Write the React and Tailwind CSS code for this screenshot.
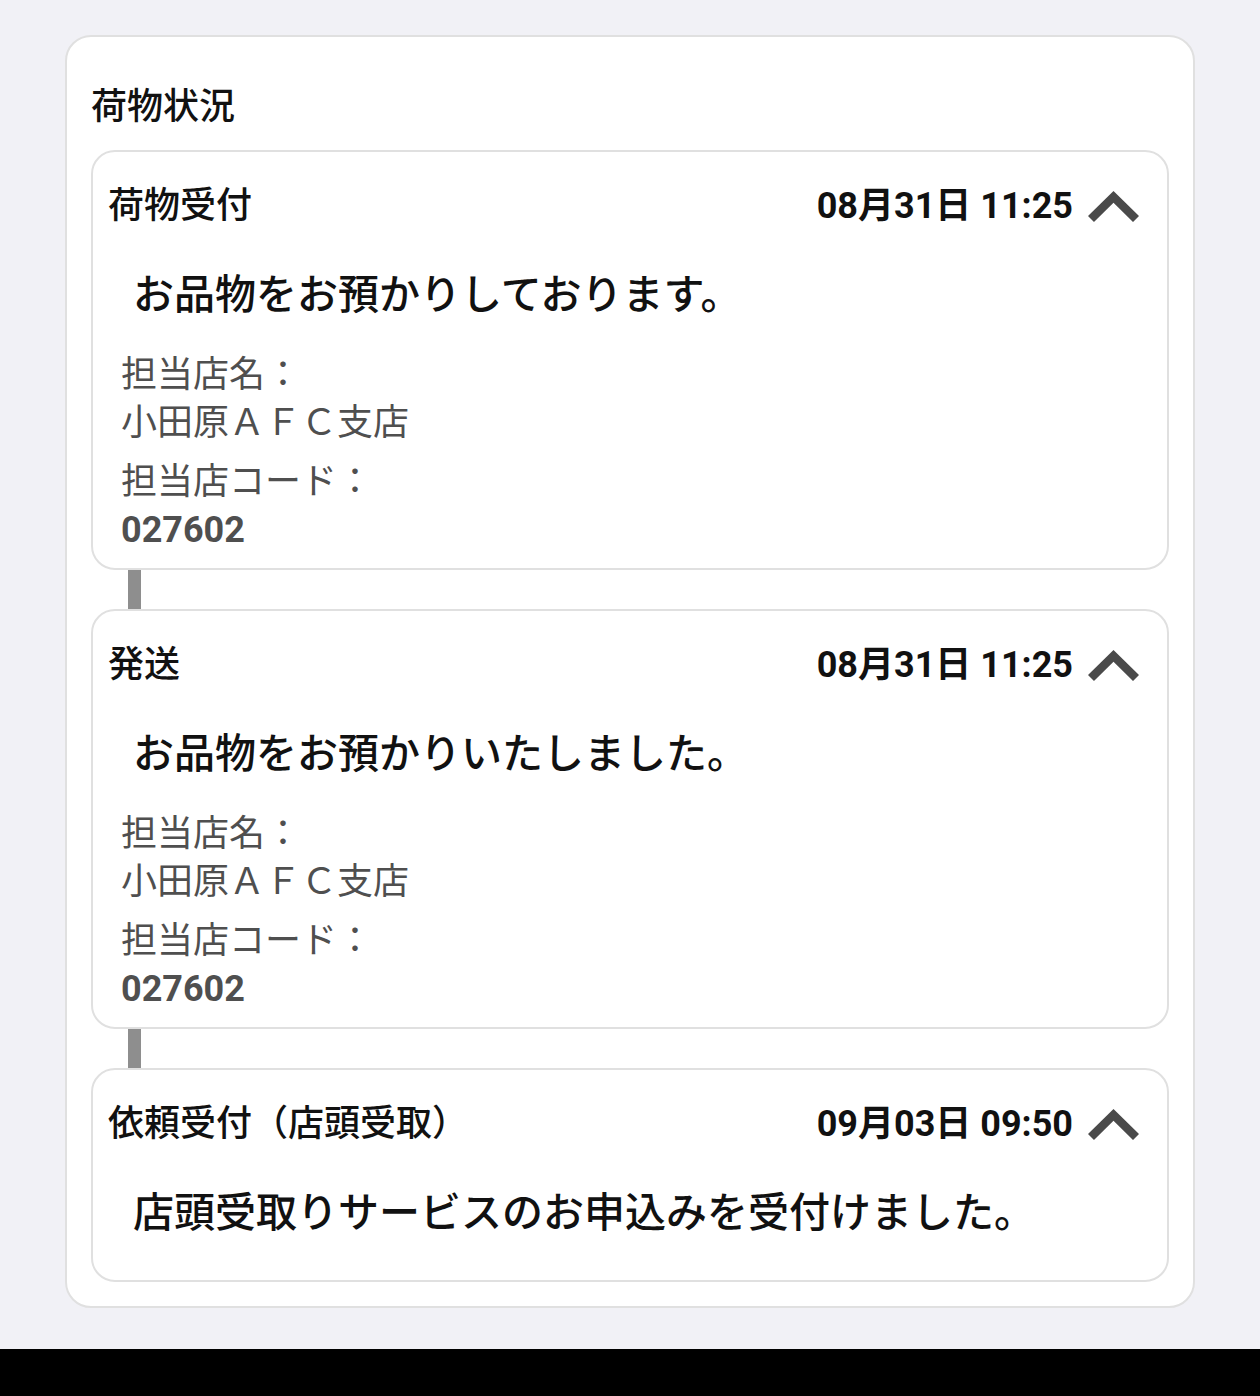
import React from "react";

const font = { fontFamily: "Roboto, 'Noto Sans CJK JP', 'Noto Sans', sans-serif" };

function Chevron() {
  return (
    <svg width="51" height="31" viewBox="6 8 12 7.41" className="shrink-0" preserveAspectRatio="none">
      <path d="M12 8l-6 6 1.41 1.41L12 10.83l4.59 4.58L18 14z" fill="#4a4a4a" />
    </svg>
  );
}

function Card({ title, date, message, details }) {
  return (
    <div className="rounded-[24px] border-2 border-[#e0e0e0] bg-white">
      <div className="flex items-center justify-between pl-[15px] pr-[28px] pt-[30px]">
        <div className="text-[36px] leading-[48px] font-medium text-[#111]">{title}</div>
        <div className="flex items-center gap-[15px]">
          <div className="text-[36px] leading-[48px] font-bold text-[#111]">{date}</div>
          <Chevron />
        </div>
      </div>
      <div className={"pl-[40px] pt-[37px] text-[41px] leading-[56px] font-medium text-[#111] " + (details ? "pb-[28px]" : "pb-[39px]")}>
        {message}
      </div>
      {details && (
        <div className="pl-[28px] pb-[14px] text-[36px] leading-[48px] text-[#4f4f4f]">
          <div>担当店名：</div>
          <div>小田原ＡＦＣ支店</div>
          <div className="mt-[11px]">担当店コード：</div>
          <div className="font-bold">027602</div>
        </div>
      )}
    </div>
  );
}

function Connector() {
  return <div className="ml-[37px] h-[39px] w-[13px] bg-[#8e8e8e]" />;
}

export default function App() {
  return (
    <div style={font} className="flex h-[1396px] w-[1260px] flex-col bg-[#f1f1f6]">
      <div className="flex-1 pt-[35px]">
        <div className="ml-[65px] w-[1130px] rounded-[26px] border-2 border-[#e0e0e0] bg-white px-[24px] pb-[24px] pt-[46px]">
          <div className="text-[36px] leading-[48px] font-medium text-[#111]">荷物状況</div>
          <div className="mt-[19px]">
            <Card title="荷物受付" date="08月31日 11:25" message="お品物をお預かりしております。" details />
            <Connector />
            <Card title="発送" date="08月31日 11:25" message="お品物をお預かりいたしました。" details />
            <Connector />
            <Card title="依頼受付（店頭受取）" date="09月03日 09:50" message="店頭受取りサービスのお申込みを受付けました。" />
          </div>
        </div>
      </div>
      <div className="h-[47px] bg-black" />
    </div>
  );
}
